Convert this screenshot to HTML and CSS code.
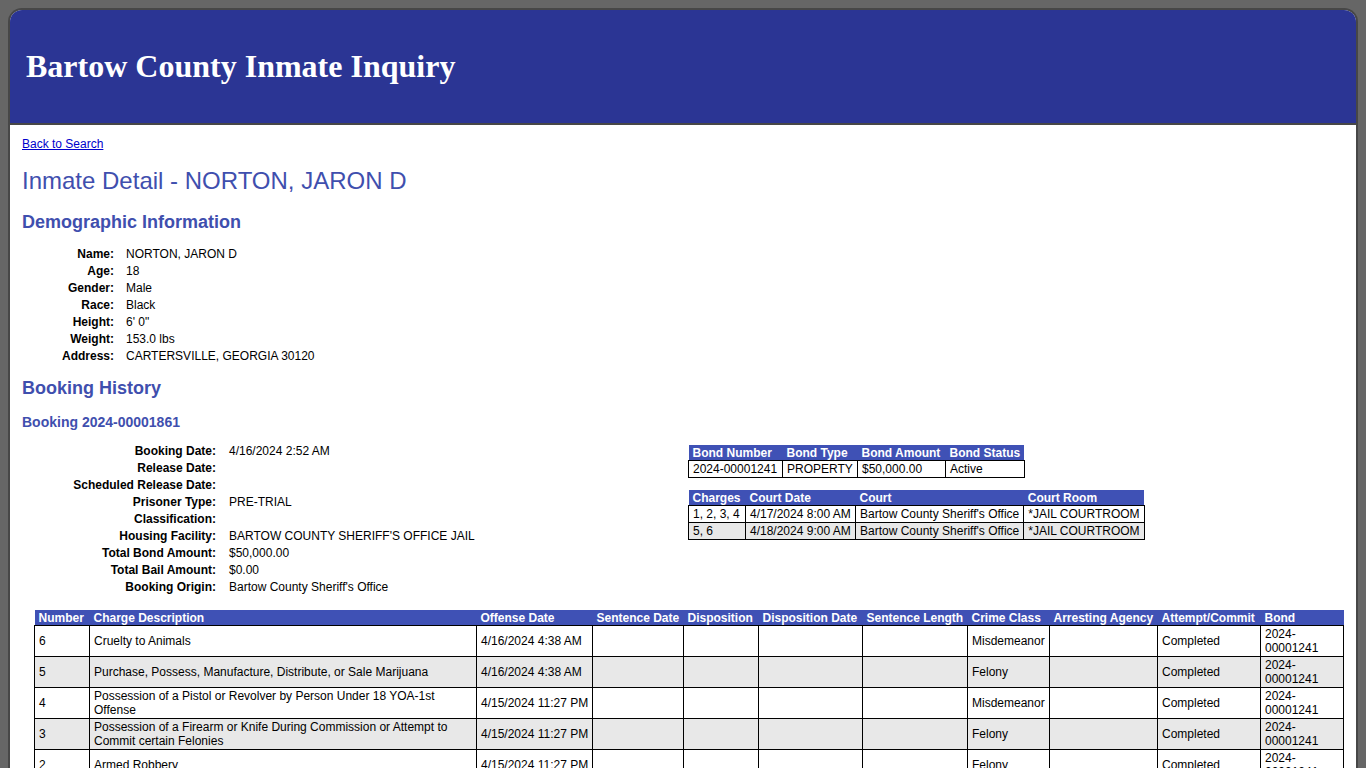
FILE: index.html
```html
<!DOCTYPE html>
<html lang="en">
<head>
<meta charset="utf-8">
<title>Bartow County Inmate Inquiry</title>
<link rel="stylesheet" href="styles.css">
</head>
<body>
<div class="page">
  <header class="banner">
    <h1>Bartow County Inmate Inquiry</h1>
  </header>
  <main class="content">
    <a href="#" class="back">Back to Search</a>
    <h2 class="title">Inmate Detail - NORTON, JARON D</h2>

    <h3 class="section">Demographic Information</h3>
    <table class="info demo">
      <tr><td class="label">Name:</td><td>NORTON, JARON D</td></tr>
      <tr><td class="label">Age:</td><td>18</td></tr>
      <tr><td class="label">Gender:</td><td>Male</td></tr>
      <tr><td class="label">Race:</td><td>Black</td></tr>
      <tr><td class="label">Height:</td><td>6' 0"</td></tr>
      <tr><td class="label">Weight:</td><td>153.0 lbs</td></tr>
      <tr><td class="label">Address:</td><td>CARTERSVILLE, GEORGIA 30120</td></tr>
    </table>

    <h3 class="section history">Booking History</h3>
    <h4 class="booking">Booking 2024-00001861</h4>

    <div class="booking-grid">
      <table class="info book">
        <tr><td class="label">Booking Date:</td><td>4/16/2024 2:52 AM</td></tr>
        <tr><td class="label">Release Date:</td><td></td></tr>
        <tr><td class="label">Scheduled Release Date:</td><td></td></tr>
        <tr><td class="label">Prisoner Type:</td><td>PRE-TRIAL</td></tr>
        <tr><td class="label">Classification:</td><td></td></tr>
        <tr><td class="label">Housing Facility:</td><td>BARTOW COUNTY SHERIFF'S OFFICE JAIL</td></tr>
        <tr><td class="label">Total Bond Amount:</td><td>$50,000.00</td></tr>
        <tr><td class="label">Total Bail Amount:</td><td>$0.00</td></tr>
        <tr><td class="label">Booking Origin:</td><td>Bartow County Sheriff's Office</td></tr>
      </table>

      <div class="side">
        <table class="grid bonds">
          <colgroup><col class="c-bnum"><col class="c-btype"><col class="c-bamt"><col class="c-bstat"></colgroup>
          <thead>
            <tr><th>Bond Number</th><th>Bond Type</th><th>Bond Amount</th><th>Bond Status</th></tr>
          </thead>
          <tbody>
            <tr><td>2024-00001241</td><td>PROPERTY</td><td>$50,000.00</td><td>Active</td></tr>
          </tbody>
        </table>

        <table class="grid courts">
          <colgroup><col class="c-chg"><col class="c-cdate"><col class="c-court"><col class="c-room"></colgroup>
          <thead>
            <tr><th>Charges</th><th>Court Date</th><th>Court</th><th>Court Room</th></tr>
          </thead>
          <tbody>
            <tr><td>1, 2, 3, 4</td><td>4/17/2024 8:00 AM</td><td>Bartow County Sheriff's Office</td><td>*JAIL COURTROOM</td></tr>
            <tr class="alt"><td>5, 6</td><td>4/18/2024 9:00 AM</td><td>Bartow County Sheriff's Office</td><td>*JAIL COURTROOM</td></tr>
          </tbody>
        </table>
      </div>
    </div>

    <table class="grid charges">
      <colgroup>
        <col class="k-num"><col class="k-desc"><col class="k-off"><col class="k-sdate"><col class="k-disp">
        <col class="k-ddate"><col class="k-slen"><col class="k-class"><col class="k-agency"><col class="k-att"><col class="k-bond">
      </colgroup>
      <thead>
        <tr>
          <th>Number</th><th>Charge Description</th><th>Offense Date</th><th>Sentence Date</th><th>Disposition</th>
          <th>Disposition Date</th><th>Sentence Length</th><th>Crime Class</th><th>Arresting Agency</th><th>Attempt/Commit</th><th>Bond</th>
        </tr>
      </thead>
      <tbody>
        <tr>
          <td>6</td><td>Cruelty to Animals</td><td class="date">4/16/2024 4:38 AM</td><td></td><td></td><td></td><td></td>
          <td>Misdemeanor</td><td></td><td>Completed</td><td>2024-00001241</td>
        </tr>
        <tr class="alt">
          <td>5</td><td>Purchase, Possess, Manufacture, Distribute, or Sale Marijuana</td><td class="date">4/16/2024 4:38 AM</td><td></td><td></td><td></td><td></td>
          <td>Felony</td><td></td><td>Completed</td><td>2024-00001241</td>
        </tr>
        <tr>
          <td>4</td><td>Possession of a Pistol or Revolver by Person Under 18 YOA-1st Offense</td><td class="date">4/15/2024 11:27 PM</td><td></td><td></td><td></td><td></td>
          <td>Misdemeanor</td><td></td><td>Completed</td><td>2024-00001241</td>
        </tr>
        <tr class="alt">
          <td>3</td><td>Possession of a Firearm or Knife During Commission or Attempt to Commit certain Felonies</td><td class="date">4/15/2024 11:27 PM</td><td></td><td></td><td></td><td></td>
          <td>Felony</td><td></td><td>Completed</td><td>2024-00001241</td>
        </tr>
        <tr>
          <td>2</td><td>Armed Robbery</td><td class="date">4/15/2024 11:27 PM</td><td></td><td></td><td></td><td></td>
          <td>Felony</td><td></td><td>Completed</td><td>2024-00001241</td>
        </tr>
      </tbody>
    </table>
  </main>
</div>
</body>
</html>
```

FILE: styles.css
```css
html, body {
  margin: 0;
  padding: 0;
}

body {
  background: #666666;
  padding: 8px;
  font-family: "Liberation Sans", Arial, sans-serif;
  font-size: 12px;
  color: #000;
}

.page {
  background: #fff;
  border: 2px solid #474747;
  border-bottom: none;
  border-radius: 14px 14px 0 0;
  overflow: hidden;
  min-height: 800px;
}

/* Top banner */
.banner {
  background: #2b3594;
  height: 113px;
  border-bottom: 2px solid #474747;
  display: flex;
  align-items: center;
  padding-left: 16px;
}

.banner h1 {
  margin: 0;
  padding-bottom: 1px;
  font-family: "Liberation Serif", "Times New Roman", serif;
  font-weight: bold;
  font-size: 32px;
  color: #fff;
}

/* Body content */
.content {
  padding: 12px 12px 20px;
}

.back {
  display: block;
  width: max-content;
  color: #0000cc;
  font-size: 12px;
  line-height: 14px;
}

.title {
  margin: 16px 0 0;
  font-size: 24px;
  line-height: 28px;
  font-weight: normal;
  color: #3f4fae;
}

.section {
  margin: 17px 0 0;
  font-size: 18px;
  line-height: 21px;
  font-weight: bold;
  color: #3f4fae;
}

.section.history {
  margin-top: 13px;
}

.booking {
  margin: 15px 0 0;
  font-size: 14px;
  line-height: 16px;
  font-weight: bold;
  color: #3f4fae;
}

/* Label / value tables */
.info {
  border-collapse: collapse;
  margin-top: 13px;
}

.info td {
  padding: 0;
  height: 17px;
  line-height: 17px;
  white-space: nowrap;
}

.info td.label {
  font-weight: bold;
  text-align: right;
  padding-right: 12px;
}

.demo td.label {
  width: 92px;
}

.book {
  margin-top: 13px;
}

.book td.label {
  width: 194px;
  padding-right: 13px;
}

/* Two-column booking block */
.booking-grid {
  display: grid;
  grid-template-columns: 666px 1fr;
  align-items: start;
}

.side {
  padding-top: 15px;
}

/* Bordered data tables */
.grid {
  border-collapse: collapse;
  table-layout: fixed;
}

.grid th {
  background: #3f51b5;
  color: #fff;
  font-weight: bold;
  text-align: left;
  padding: 1px 4px 0 4px;
  height: 14px;
  line-height: 14px;
  white-space: nowrap;
  overflow: hidden;
}

.grid td {
  border: 1px solid #000;
  padding: 1px 4px;
  line-height: 14px;
  background: #fff;
}

.grid tr.alt td {
  background: #e8e8e8;
}

.bonds td,
.courts td {
  white-space: nowrap;
}

.c-bnum { width: 94px; }
.c-btype { width: 75px; }
.c-bamt { width: 88px; }
.c-bstat { width: 77px; }

.courts {
  margin-top: 12px;
}

.c-chg { width: 57px; }
.c-cdate { width: 110px; }
.c-court { width: 168px; }
.c-room { width: 119px; }

/* Charge list */
.charges {
  margin: 14px 0 0 12px;
  width: 1309px;
}

.charges td {
  height: 28px;
  line-height: 14px;
  vertical-align: middle;
}

.charges td.date {
  white-space: nowrap;
}

.k-num { width: 55px; }
.k-desc { width: 387px; }
.k-off { width: 116px; }
.k-sdate { width: 91px; }
.k-disp { width: 75px; }
.k-ddate { width: 104px; }
.k-slen { width: 105px; }
.k-class { width: 82px; }
.k-agency { width: 108px; }
.k-att { width: 103px; }
.k-bond { width: 83px; }
```
